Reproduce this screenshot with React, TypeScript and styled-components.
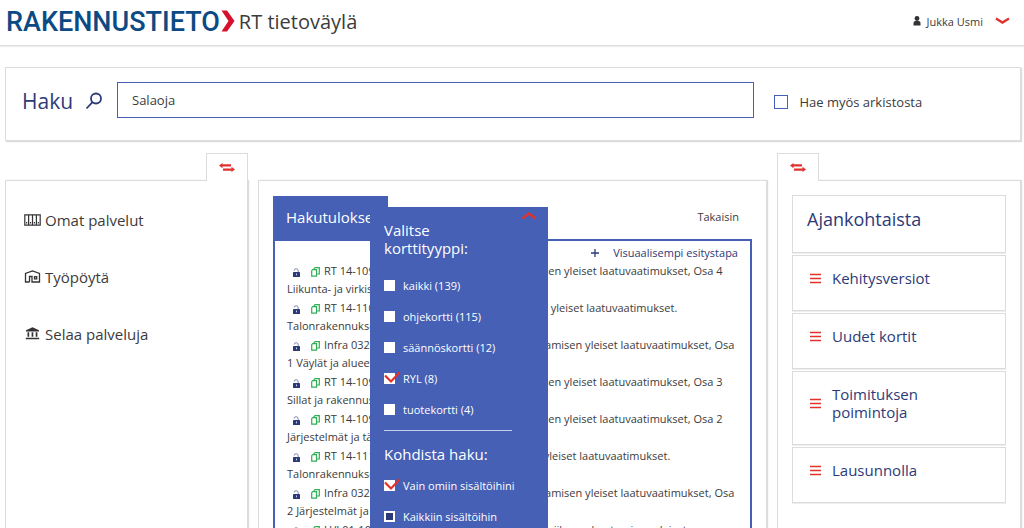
import React from "react";
import styled, { createGlobalStyle } from "styled-components";

const blue = "#4560b5";
const navy = "#2d3a78";
const red = "#e0322f";
const ink = "#3b3b3b";
const line = "#dcdcdc";

const GlobalStyle = createGlobalStyle`
  *, *::before, *::after { box-sizing: border-box; }
  body {
    margin: 0;
    background: #fff;
    color: ${ink};
    font-family: "Open Sans", "Noto Sans", sans-serif;
    font-size: 11px;
  }
  h1, h2, h3, p, ul { margin: 0; padding: 0; font-weight: 400; }
  ul { list-style: none; }
  a { color: inherit; text-decoration: none; }
  button { border: 0; padding: 0; background: none; font: inherit; color: inherit; cursor: pointer; }
  svg { display: block; flex: none; }
`;

const Header = styled.header`
  display: flex;
  align-items: center;
  justify-content: space-between;
  height: 46px;
  padding: 0 14px 3px 6px;
  border-bottom: 1px solid ${line};
  box-shadow: 0 1px 1px #eee;
`;

const Brand = styled.a`
  display: flex;
  align-items: center;
`;

const Logo = styled.span`
  padding-top: 2px;
  font-family: Roboto, "Liberation Sans", sans-serif;
  font-size: 27px;
  line-height: 40px;
  font-weight: 500;
  color: #0b4a84;
`;

const Product = styled.h1`
  margin-left: 4px;
  font-size: 20px;
`;

const UserButton = styled.button`
  display: flex;
  align-items: center;
  gap: 6px;
  font-size: 11px;

  svg:last-child { margin-left: 6px; }
`;

const Page = styled.main`
  padding: 21px 3px 0 5px;
`;

const SearchCard = styled.form`
  display: grid;
  grid-template-columns: 95px 12fr 5fr;
  align-items: start;
  height: 74px;
  padding: 14px 0 0 16px;
  border: 1px solid ${line};
  box-shadow: 1px 1px 1px #ddd;
`;

const SearchLabel = styled.label`
  display: flex;
  align-items: center;
  gap: 12px;
  height: 37px;
  font-size: 21px;
  color: ${navy};
`;

const SearchInput = styled.input`
  width: 100%;
  height: 36px;
  padding: 0 14px;
  border: 1px solid ${blue};
  background: #fff;
  color: ${ink};
  font: inherit;
  font-size: 13px;
  outline: 0;
`;

const ArchiveLabel = styled.label`
  display: flex;
  align-items: center;
  gap: 11px;
  height: 39px;
  margin-left: 20px;
  font-size: 13px;
`;

const ArchiveBox = styled.input`
  appearance: none;
  width: 14px;
  height: 14px;
  margin: 0;
  border: 1px solid ${blue};
`;

const Columns = styled.div`
  display: grid;
  grid-template-columns: minmax(0, 243fr) minmax(0, 509fr) minmax(0, 244fr);
  column-gap: 10px;
  margin-top: 12px;
`;

const Column = styled.div`
  display: flex;
  flex-direction: column;
`;

const Tab = styled.button<{ $side: "left" | "right" }>`
  display: flex;
  align-items: center;
  justify-content: center;
  align-self: ${(p) => (p.$side === "left" ? "flex-start" : "flex-end")};
  z-index: 1;
  width: 42px;
  height: 28px;
  margin-bottom: -1px;
  border: 1px solid ${line};
  border-bottom: 0;
  background: #fff;
`;

const Panel = styled.section<{ $pad: string; $offset?: boolean }>`
  flex: 1;
  margin-top: ${(p) => (p.$offset ? "27px" : "0")};
  padding: ${(p) => p.$pad};
  border: 1px solid ${line};
  border-bottom: 0;
  box-shadow: 1px 0 1px #ddd;
`;

const NavLink = styled.a`
  display: flex;
  align-items: center;
  gap: 4px;
  height: 57px;
  font-size: 15px;
`;

const Results = styled.div`
  position: relative;
`;

const ResultsHead = styled.div`
  display: flex;
  align-items: center;
  justify-content: space-between;
  padding-right: 13px;
`;

const BackLink = styled.a`
  margin-bottom: 4px;
`;

const ResultsTitle = styled.h2`
  height: 44px;
  width: 115px;
  padding-left: 13px;
  line-height: 42px;
  font-size: 15px;
  color: #fff;
  background: ${blue};
  white-space: nowrap;
`;

const ResultsBox = styled.div`
  border: 2px solid ${blue};
  border-bottom: 0;
  padding: 2px 12px 0;
  margin-top: -1px;
`;

const ViewLink = styled.a`
  display: flex;
  align-items: center;
  justify-content: flex-end;
  gap: 14px;
  height: 19px;
  color: ${navy};
`;

const ResultItem = styled.li`
  margin-bottom: 1px;
  line-height: 18px;
`;

const ResultIcons = styled.span`
  display: inline-flex;
  align-items: center;
  gap: 10px;
  padding: 0 4px 0 5px;
  vertical-align: middle;
`;

const Filter = styled.aside`
  position: absolute;
  top: 11px;
  left: 97px;
  width: 178px;
  padding: 14px;
  background: ${blue};
  color: #fff;
  font-weight: 500;
`;

const CloseButton = styled.button`
  position: absolute;
  top: 4px;
  right: 11px;
`;

const FilterTitle = styled.h3`
  font-size: 15px;
  line-height: 18px;
`;

const FilterList = styled.ul<{ $tight?: boolean }>`
  padding-top: ${(p) => (p.$tight ? "7px" : "13px")};
`;

const FilterLabel = styled.label`
  display: flex;
  align-items: center;
  gap: 8px;
  height: 31px;
  white-space: nowrap;
`;

const TickBox = styled.span`
  position: relative;
  display: flex;

  svg {
    position: absolute;
    left: 0;
    top: -2px;
    pointer-events: none;
  }
`;

const TickInput = styled.input<{ $dark?: boolean }>`
  appearance: none;
  width: 11px;
  height: 11px;
  margin: 0;
  border: ${(p) => (p.$dark ? "2px" : "1px")} solid #fff;
  background: ${(p) => (p.$dark ? navy : "#fff")};
`;

const Divider = styled.hr`
  width: 128px;
  height: 1px;
  margin: 5px 0 14px;
  border: 0;
  background: #c5cfee;
`;

const NewsCard = styled.li<{ $heading?: boolean }>`
  display: flex;
  margin-bottom: 2px;
  padding: ${(p) => (p.$heading ? "11px 14px 20px" : "13px 16px 23px")};
  border: 1px solid ${line};
  box-shadow: 0 1px 0 #eee;
  color: ${navy};
`;

const NewsTitle = styled.h2`
  font-size: 18px;
  line-height: 25px;
`;

const NewsLink = styled.a`
  display: flex;
  align-items: center;
  gap: 10px;
  font-size: 15px;
  line-height: 18px;
`;

const NewsText = styled.span`
  max-width: 110px;
`;

const SwapIcon = () => (
  <svg width="16" height="9" viewBox="0 0 16 9" fill={red}>
    <path d="M3.500 0v1.300H12v2.200H3.500v1.700L0 2.600zM12.500 9V7.700H4V5.500h8.500V3.800L16 6.400z" />
  </svg>
);

const MenuIcon = () => (
  <svg width="13" height="11" viewBox="0 0 13 11" stroke={red} strokeWidth="1.500">
    <path d="M1 1.500h11M1 5.500h11M1 9.500h11" />
  </svg>
);

const Tick = () => (
  <svg width="17" height="13" viewBox="0 0 17 13" fill="none" stroke={red} strokeWidth="2.200">
    <path d="M1 4.500l6 6L15.500 1.500" />
  </svg>
);

const LockIcon = () => (
  <svg width="9" height="9" viewBox="0 0 9 9">
    <rect x="1" y="4" width="7" height="5" rx=".6" fill={navy} />
    <path d="M2.200 2.500Q2.200.7 4.200.7T6.200 3V4" fill="none" stroke="#7d86ad" strokeWidth="1" />
    <path d="M4.500 5.500v1.800" stroke="#c5cfee" strokeWidth="1" />
  </svg>
);

const CopyIcon = () => (
  <svg width="9" height="10" viewBox="0 0 9 10" fill="#fff" stroke="#2fae55" strokeWidth="1.200">
    <path d="M4 .7h4.300v6.300H3V1.700z" />
    <path d="M1.700 2.700h3.800v6.500H.7V3.700z" />
  </svg>
);

const BindersIcon = () => (
  <svg width="17" height="12" viewBox="0 0 17 12" fill="none" stroke="#333" strokeWidth="1.200">
    <path d="M.8.8h15.400v10.400H.8zM4.600.8v10.400M8.500.8v10.400M12.400.8v10.400" />
    <path d="M2.700 8v1.500M6.500 8v1.500M10.400 8v1.500M14.300 8v1.500" />
  </svg>
);

const HouseIcon = () => (
  <svg width="17" height="13" viewBox="0 0 17 13" fill="none" stroke="#333" strokeWidth="1.300">
    <path d="M5.500 12V6.500H8V12H15.500V3.500L8.500 1l-7 2.500V12H5.500" />
    <rect x="10.500" y="6.700" width="2.200" height="2.200" />
  </svg>
);

const BankIcon = () => (
  <svg width="17" height="13" viewBox="0 0 17 13" fill="#333">
    <path d="M8.500.3L15 3.300v1.200H2V3.300zM3.500 5.300h1.700v4.500H3.500zM7.600 5.300h1.700v4.500H7.600zM11.700 5.300h1.700v4.500h-1.700zM1.800 10.800h13.400v1.500H1.800z" />
  </svg>
);

const navItems = [
  { text: "Omat palvelut", icon: <BindersIcon /> },
  { text: "Työpöytä", icon: <HouseIcon /> },
  { text: "Selaa palveluja", icon: <BankIcon /> },
];

const results = [
  ["RT 14-10985 InfraRYL 2006, Infrarakentamisen yleiset laatuvaatimukset, Osa 4", "Liikunta- ja virkistyspaikkojen rakenteet"],
  ["RT 14-11016 RunkoRYL 2010, Rakentamisen yleiset laatuvaatimukset.", "Talonrakennuksen runkotyöt"],
  ["Infra 032-710096 InfraRYL 2006 Infrarakentamisen yleiset laatuvaatimukset, Osa", "1 Väylät ja alueet"],
  ["RT 14-10984 InfraRYL 2006, Infrarakentamisen yleiset laatuvaatimukset, Osa 3", "Sillat ja rakennustekniset osat"],
  ["RT 14-10983 InfraRYL 2006, Infrarakentamisen yleiset laatuvaatimukset, Osa 2", "Järjestelmät ja täydentävät osat"],
  ["RT 14-11122 SisäRYL 2013 – Rakentamisen yleiset laatuvaatimukset.", "Talonrakennuksen sisätyöt"],
  ["Infra 032-710097 InfraRYL 2006 Infrarakentamisen yleiset laatuvaatimukset, Osa", "2 Järjestelmät ja täydentävät osat"],
  ["LVI 01-10355 TalotekniikkaRYL 2002 Talotekniikan rakentamisen yleiset", "laatuvaatimukset"],
];

const cardTypes = [
  { text: "kaikki (139)", on: false },
  { text: "ohjekortti (115)", on: false },
  { text: "säännöskortti (12)", on: false },
  { text: "RYL (8)", on: true },
  { text: "tuotekortti (4)", on: false },
];

const scopes = [
  { text: "Vain omiin sisältöihini", on: true },
  { text: "Kaikkiin sisältöihin", on: false, dark: true },
];

const news = ["Kehitysversiot", "Uudet kortit", "Toimituksen poimintoja", "Lausunnolla"];

const FilterOption = ({ text, on, dark }: { text: string; on: boolean; dark?: boolean }) => (
  <li>
    <FilterLabel>
      <TickBox>
        <TickInput type="checkbox" defaultChecked={on} $dark={dark} />
        {on && <Tick />}
      </TickBox>
      {text}
    </FilterLabel>
  </li>
);

export default function App() {
  return (
    <>
      <GlobalStyle />
      <Header>
        <Brand href="#">
          <Logo>RAKENNUSTIETO</Logo>
          <svg width="15" height="22" viewBox="0 0 15 22" fill="#d5112e">
            <path d="M1.500.5h5.500L14.500 11 7 21.500H1.500L8.500 11z" />
          </svg>
          <Product>RT tietoväylä</Product>
        </Brand>
        <UserButton type="button">
          <svg width="8" height="10" viewBox="0 0 8 10" fill="#333">
            <circle cx="4" cy="2.500" r="2.400" />
            <path d="M.5 9.500V7Q.5 5 2.500 5h3Q7.500 5 7.500 7v2.500z" />
          </svg>
          Jukka Usmi
          <svg width="15" height="8" viewBox="0 0 15 8" fill="none" stroke={red} strokeWidth="2.400">
            <path d="M1 1.500l6.500 4 6.500-4" />
          </svg>
        </UserButton>
      </Header>
      <Page>
        <SearchCard onSubmit={(e) => e.preventDefault()}>
          <SearchLabel htmlFor="search">
            Haku
            <svg width="18" height="18" viewBox="0 0 18 18" fill="none" stroke={navy} strokeWidth="1.800">
              <circle cx="11" cy="6.500" r="5" />
              <path d="M7.500 10.200L1.500 16.500" />
            </svg>
          </SearchLabel>
          <SearchInput id="search" type="text" defaultValue="Salaoja" />
          <ArchiveLabel>
            <ArchiveBox type="checkbox" />
            Hae myös arkistosta
          </ArchiveLabel>
        </SearchCard>
        <Columns>
          <Column>
            <Tab type="button" $side="right" aria-label="Vaihda vasen paneeli">
              <SwapIcon />
            </Tab>
            <Panel as="nav" $pad="10px 18px">
              {navItems.map((n) => (
                <NavLink href="#" key={n.text}>
                  {n.icon}
                  {n.text}
                </NavLink>
              ))}
            </Panel>
          </Column>
          <Column>
            <Panel $pad="15px 14px 0" $offset>
              <Results>
                <ResultsHead>
                  <ResultsTitle>Hakutulokset</ResultsTitle>
                  <BackLink href="#">Takaisin</BackLink>
                </ResultsHead>
                <ResultsBox>
                  <ViewLink href="#">
                    <svg width="8" height="8" viewBox="0 0 8 8" stroke={navy} strokeWidth="1.300">
                      <path d="M4 0v8M0 4h8" />
                    </svg>
                    Visuaalisempi esitystapa
                  </ViewLink>
                  <ul>
                    {results.map(([title, rest]) => (
                      <ResultItem key={title}>
                        <ResultIcons>
                          <LockIcon />
                          <CopyIcon />
                        </ResultIcons>
                        <a href="#">
                          {title}
                          <br />
                          {rest}
                        </a>
                      </ResultItem>
                    ))}
                  </ul>
                </ResultsBox>
                <Filter>
                  <CloseButton type="button" aria-label="Sulje">
                    <svg width="16" height="9" viewBox="0 0 16 9" fill="none" stroke={red} strokeWidth="2.400">
                      <path d="M1.500 7.500L8 2.500l6.500 5" />
                    </svg>
                  </CloseButton>
                  <FilterTitle>
                    Valitse
                    <br />
                    korttityyppi:
                  </FilterTitle>
                  <FilterList>
                    {cardTypes.map((c) => (
                      <FilterOption key={c.text} {...c} />
                    ))}
                  </FilterList>
                  <Divider />
                  <FilterTitle>Kohdista haku:</FilterTitle>
                  <FilterList $tight>
                    {scopes.map((c) => (
                      <FilterOption key={c.text} {...c} />
                    ))}
                  </FilterList>
                </Filter>
              </Results>
            </Panel>
          </Column>
          <Column>
            <Tab type="button" $side="left" aria-label="Vaihda oikea paneeli">
              <SwapIcon />
            </Tab>
            <Panel $pad="14px 14px 24px">
              <ul>
                <NewsCard $heading>
                  <NewsTitle>Ajankohtaista</NewsTitle>
                </NewsCard>
                {news.map((n) => (
                  <NewsCard key={n}>
                    <NewsLink href="#">
                      <MenuIcon />
                      <NewsText>{n}</NewsText>
                    </NewsLink>
                  </NewsCard>
                ))}
              </ul>
            </Panel>
          </Column>
        </Columns>
      </Page>
    </>
  );
}
